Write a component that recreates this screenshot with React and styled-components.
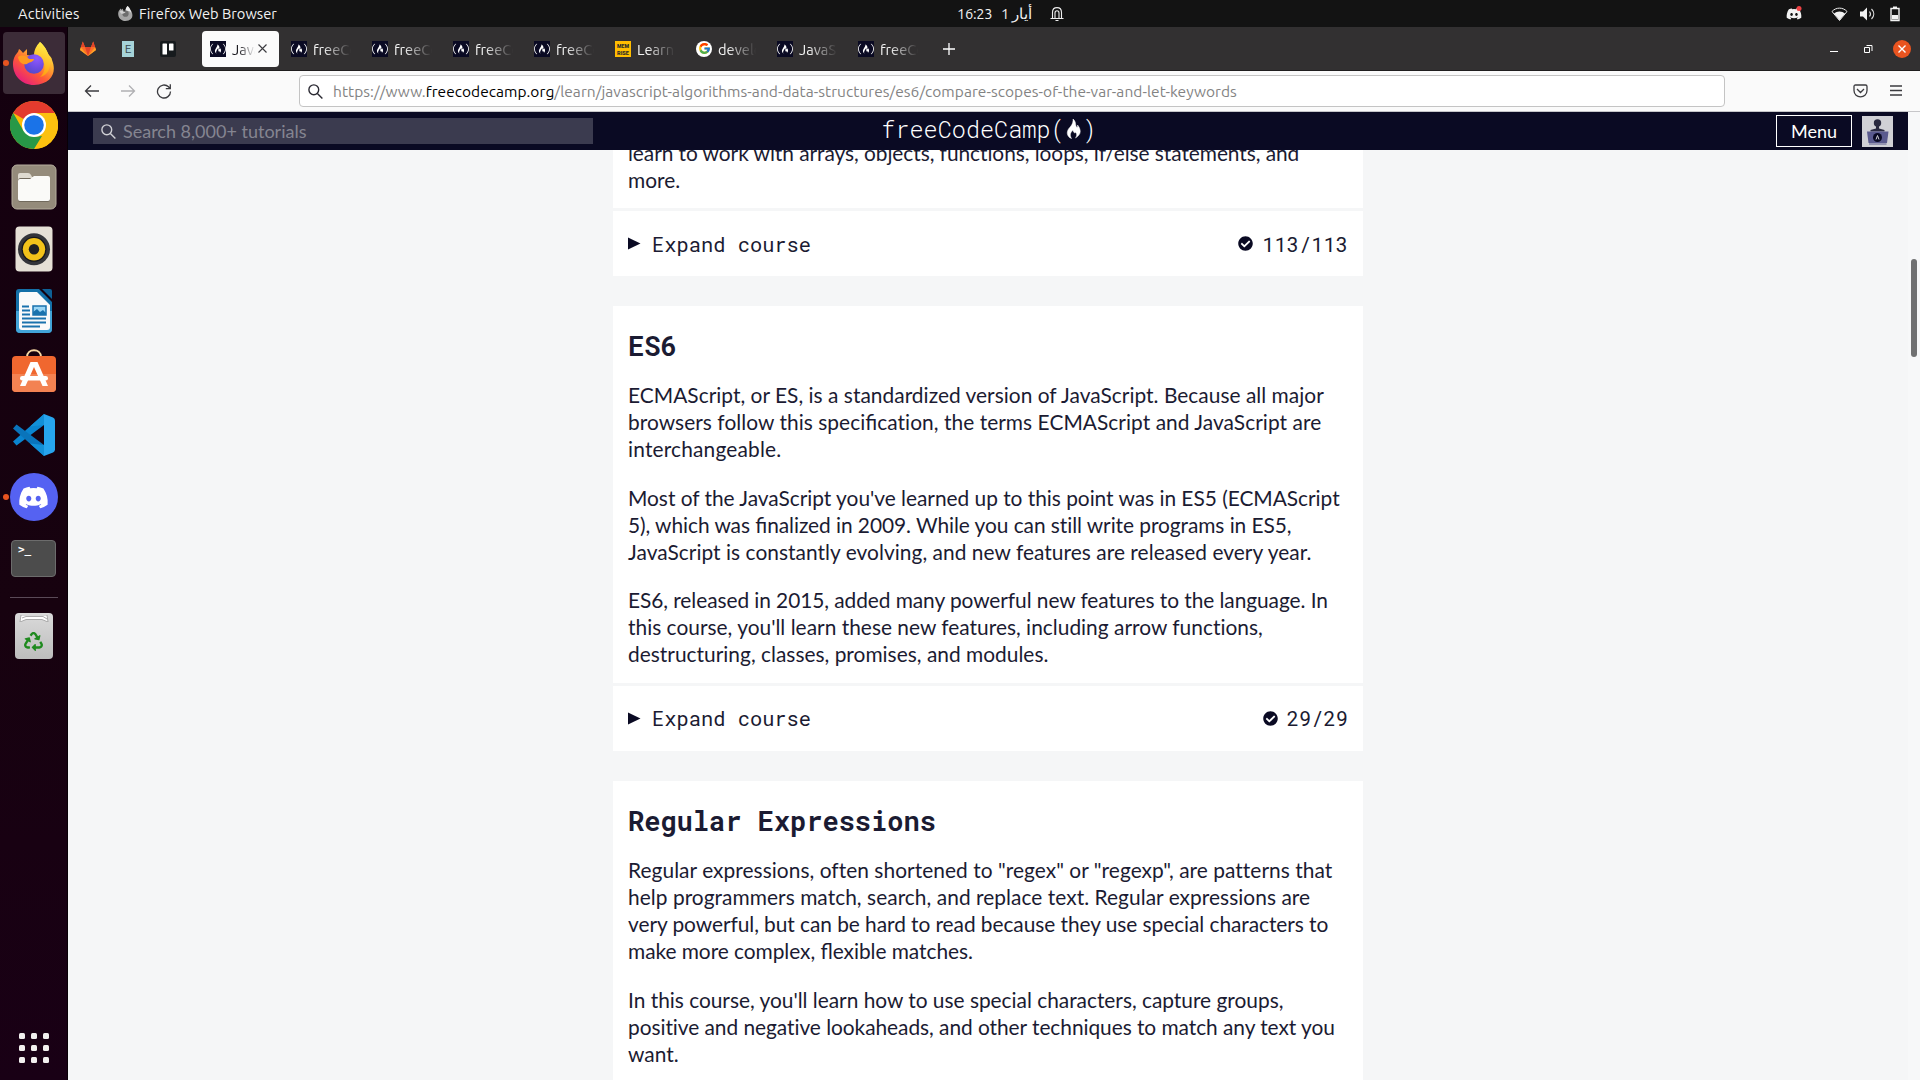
import React from 'react';
import styled, { createGlobalStyle, css } from 'styled-components';
import { FaFreeCodeCamp, FaDiscord, FaRecycle, FaCheckCircle } from 'react-icons/fa';
import { FcGoogle } from 'react-icons/fc';

const ui = '"Ubuntu", "Noto Sans", "Open Sans", sans-serif';
const body = '"Lato", sans-serif';
const mono = '"Roboto Mono", "DejaVu Sans Mono", monospace';

const GlobalStyle = createGlobalStyle`
  * { box-sizing: border-box; }
  body { margin: 0; overflow: hidden; background: #f5f6f7; }
  svg { display: block; flex: none; }
`;

const Desktop = styled.div`
  display: flex;
  flex-direction: column;
  width: 1920px;
  height: 1080px;
  overflow: hidden;
  font-family: ${ui};
`;

/* ---------- system bar ---------- */
const SystemBar = styled.header`
  display: flex;
  align-items: center;
  height: 27px;
  flex: none;
  background: #131313;
  color: #f2f2f2;
  font-size: 14.67px;
  line-height: 27px;
  padding: 0 20px 0 18px;
`;
const BarStart = styled.div`
  display: flex;
  align-items: center;
  width: 939px;
`;
const BarEnd = styled.div`
  display: flex;
  align-items: center;
  margin-left: auto;
`;
const BarText = styled.span`
  letter-spacing: ${(p) => p.$spacing || 0}px;
  width: ${(p) => (p.$width ? p.$width + 'px' : 'auto')};
  white-space: nowrap;
`;
const Clock = styled.div`
  display: flex;
  align-items: center;
  height: 27px;
`;
const Spacer = styled.span`
  flex: none;
  width: ${(p) => p.$w}px;
`;

/* ---------- dock ---------- */
const Workspace = styled.div`
  display: flex;
  flex: 1;
  min-height: 0;
`;
const Dock = styled.nav`
  display: flex;
  flex-direction: column;
  align-items: center;
  width: 68px;
  flex: none;
  padding: 5px 0 10px;
  background: linear-gradient(#14000f, #17020f 55%, #190015);
  border-right: 1px solid #080006;
`;
const DockSlot = styled.div`
  position: relative;
  display: flex;
  align-items: center;
  justify-content: center;
  width: 62px;
  height: 62px;
  padding-bottom: ${(p) => p.$lift || 0}px;
  flex: none;
  border-radius: 4px;
  background: ${(p) => (p.$active ? '#3c2c38' : 'transparent')};
  ${(p) =>
    p.$running &&
    css`
      &::before {
        content: '';
        position: absolute;
        left: 0;
        top: 28px;
        width: 6px;
        height: 6px;
        border-radius: 50%;
        background: #e95420;
      }
    `}
`;
const DockRule = styled.div`
  width: 48px;
  height: 1px;
  margin: 7px 0;
  background: #5a4a57;
`;
const AppGrid = styled.div`
  display: grid;
  grid-template-columns: repeat(3, 6px);
  gap: 6px;
  margin-top: auto;
  margin-bottom: 7px;
`;
const Dot = styled.i`
  width: 6px;
  height: 6px;
  border-radius: 1.5px;
  background: #f2f0ef;
`;

/* ---------- browser chrome ---------- */
const Browser = styled.main`
  display: flex;
  flex-direction: column;
  flex: 1;
  min-width: 0;
`;
const TabStrip = styled.div`
  display: flex;
  align-items: center;
  height: 44px;
  flex: none;
  padding-right: 9px;
  background: #323031;
  border-bottom: 1px solid #1f1d1e;
`;
const Pinned = styled.div`
  display: flex;
  align-items: center;
  gap: 26px;
  width: 134px;
  padding-left: 12px;
`;
const Tab = styled.div`
  display: flex;
  align-items: center;
  gap: 6px;
  width: ${(p) => (p.$active ? 77 : 81)}px;
  margin-right: ${(p) => (p.$active ? 4 : 0)}px;
  height: 36px;
  padding-left: 8px;
  border-radius: 4px;
  background: ${(p) => (p.$active ? '#fbfbfb' : 'transparent')};
  color: ${(p) => (p.$active ? '#15141a' : '#f4f4f4')};
`;
const TabTitle = styled.span`
  width: ${(p) => (p.$active ? 24 : 39)}px;
  margin-right: ${(p) => (p.$active ? -4 : 0)}px;
  overflow: hidden;
  white-space: nowrap;
  font-size: 14.67px;
  line-height: 20px;
  padding-top: 2px;
  mask-image: linear-gradient(to right, #000 25%, transparent 98%);
`;
const FavBox = styled.span`
  display: flex;
  align-items: center;
  justify-content: center;
  width: ${(p) => p.$w || 16}px;
  height: 16px;
  flex: none;
  background: ${(p) => p.$bg || 'transparent'};
  color: ${(p) => p.$fg || '#fff'};
  font: ${(p) => p.$font || `700 12px ${ui}`};
  text-align: center;
  border-radius: ${(p) => p.$r || 0}px;
`;
const WindowButtons = styled.div`
  display: flex;
  align-items: center;
  margin-left: auto;
`;
const NavBar = styled.div`
  display: flex;
  align-items: center;
  height: 41px;
  flex: none;
  padding: 0 18px 1px 16px;
  background: #fafafa;
  border-bottom: 1px solid #c6c6c9;
`;
const NavButtons = styled.div`
  display: flex;
  gap: 20px;
  width: 215px;
`;
const UrlBox = styled.div`
  display: flex;
  align-items: center;
  width: 1426px;
  height: 32px;
  margin-top: 1px;
  padding-left: 8px;
  gap: 10px;
  border: 1px solid #c4c4c4;
  border-radius: 4px;
  background: #fff;
  color: #838383;
  font-size: 15.5px;
  letter-spacing: 0.05px;
  white-space: nowrap;
  b { font-weight: 400; color: #000; }
`;
const NavEnd = styled.div`
  display: flex;
  align-items: center;
  gap: 22px;
  margin-left: auto;
`;

/* ---------- page ---------- */
const Viewport = styled.div`
  display: flex;
  flex: 1;
  min-height: 0;
`;
const Page = styled.div`
  display: flex;
  flex-direction: column;
  width: 1840px;
  background: #f5f6f7;
`;
const ScrollTrack = styled.div`
  width: 12px;
  padding: 147px 3px 0;
  background: #f7f8f9;
`;
const ScrollThumb = styled.div`
  height: 98px;
  border-radius: 3px;
  background: #707172;
`;
const SiteHeader = styled.div`
  display: grid;
  grid-template-columns: 1fr auto 1fr;
  align-items: center;
  height: 38px;
  flex: none;
  padding: 0 25px;
  background: #0a0a23;
`;
const SearchBox = styled.div`
  display: flex;
  align-items: center;
  gap: 7px;
  width: 500px;
  height: 26px;
  padding-left: 8px;
  background: #3b3b4f;
  color: #858591;
  font: 18px/26px ${body};
`;
const Logo = styled.div`
  display: flex;
  align-items: center;
  gap: 1.5px;
  padding: 0 0 4px 2px;
  color: #fff;
  font: 350 23.5px/32px ${mono};
`;
const HeaderEnd = styled.div`
  display: flex;
  justify-content: flex-end;
  align-items: center;
  gap: 10px;
  margin-right: -10px;
`;
const MenuButton = styled.button`
  width: 76px;
  height: 32px;
  padding: 0;
  border: 1px solid #fff;
  background: #0a0a23;
  color: #fff;
  font: 18px/28px ${body};
`;
const Avatar = styled.div`
  width: 31px;
  height: 31px;
  margin-top: 1px;
  background: #d0d0d5;
`;
const Courses = styled.div`
  display: flex;
  flex-direction: column;
  gap: 30px;
  width: 750px;
  flex: 1;
  min-height: 0;
  margin-left: 545px;
  overflow: hidden;
`;
const Course = styled.section`
  display: flex;
  flex-direction: column;
  gap: 3px;
  flex: none;
  margin-top: ${(p) => p.$shift || 0}px;
`;
const Intro = styled.div`
  padding: 0 15px ${(p) => (p.$titled ? 15.6 : 15)}px;
  background: #fff;
  color: #1b1b32;
`;
const Heading = styled.h3`
  margin: 0;
  padding: 24px 0 19.2px;
  font: 700 27px/32px ${mono};
`;
const Text = styled.p`
  margin: 0 0 21.6px;
  font: 20.9px/27px ${body};
  font-variant-ligatures: none;
  white-space: nowrap;
  &:last-child { margin-bottom: 0; }
`;
const TextLine = styled.span`
  display: block;
  letter-spacing: ${(p) => p.$tracking}px;
`;
const Ligature = styled.span`
  font-variant-ligatures: common-ligatures;
  letter-spacing: 0;
`;
const Toggle = styled.div`
  display: flex;
  align-items: center;
  height: 65px;
  padding: 0 15px;
  background: #fff;
  color: #1b1b32;
  font: 20.4px/30px ${mono};
`;
const Label = styled.span`
  margin-left: 11px;
  padding-top: 2px;
`;
const Count = styled.span`
  display: flex;
  align-items: center;
  gap: 9px;
  margin-left: auto;
`;
const CountText = styled.span`
  padding-top: 2px;
`;

/* ---------- icons ---------- */
const FirefoxIcon = () => (
  <svg width="42" height="43" viewBox="0 0 42 43">
    <defs>
      <linearGradient id="ffBody" x1="0.85" y1="0.1" x2="0.2" y2="1">
        <stop offset="0" stopColor="#fff44f" />
        <stop offset="0.3" stopColor="#ffb02e" />
        <stop offset="0.6" stopColor="#ff5a36" />
        <stop offset="1" stopColor="#e31587" />
      </linearGradient>
      <linearGradient id="ffTail" x1="0.6" y1="0" x2="0.4" y2="1">
        <stop offset="0" stopColor="#fff14a" />
        <stop offset="1" stopColor="#ff980e" />
      </linearGradient>
      <radialGradient id="ffGlobe" cx="0.65" cy="0.2" r="0.9">
        <stop offset="0" stopColor="#9059ff" />
        <stop offset="0.6" stopColor="#6a4be0" />
        <stop offset="1" stopColor="#4f4ac4" />
      </radialGradient>
    </defs>
    <path d="M27 0C33 5 34 10 36 13c1 1 3 3 3 5 5 12 0 24-18 25C9 43 0 34 0 22 0 16 3 12 5 10l1-3c2 1 3 3 4 4l4-4v6c2 0 5 1 7 3 0-5 2-11 6-16z" fill="url(#ffBody)" />
    <path d="M27 0c6 6 8 10 9 15 3 8 0 18-9 20 6-5 6-14 1-19-2-2-5-3-7-3 0-5 2-9 6-13z" fill="url(#ffTail)" />
    <circle cx="21" cy="22" r="9.8" fill="url(#ffGlobe)" />
    <path d="M5 15c4-3 9-1 11 2h5c0 3-5 3-7 5-4 1-8-1-9-7z" fill="#ff9a1f" />
  </svg>
);
const MiniFirefox = () => (
  <svg width="15" height="15" viewBox="0 0 42 43">
    <path d="M27 0C33 5 34 10 36 13c1 1 3 3 3 5 5 12 0 24-18 25C9 43 0 34 0 22 0 16 3 12 5 10l1-3c2 1 3 3 4 4l4-4v6c2 0 5 1 7 3 0-5 2-11 6-16z" fill="#a5a5a5" />
    <path d="M27 0c6 6 10 12 10 20-2-5-9-7-16-7 0-5 2-9 6-13z" fill="#eee" />
    <circle cx="21" cy="22" r="9" fill="#6e6e6e" />
    <path d="M5 15c4-3 9-1 11 2h5c0 3-5 3-7 5-4 1-8-1-9-7z" fill="#d0d0d0" />
  </svg>
);
const ChromeIcon = () => (
  <svg width="48" height="48" viewBox="0 0 48 48">
    <circle cx="24" cy="24" r="24" fill="#fbbc05" />
    <path d="M24 24 3.2 12A24 24 0 0 1 44.8 12z" fill="#e33b2e" />
    <path d="M44.8 12H24v12l10.4 6L24 48A24 24 0 0 0 44.8 12z" fill="#fcc10f" />
    <path d="M3.2 12 13.6 30 24 36l8-1L24 48A24 24 0 0 1 3.2 12z" fill="#279847" />
    <circle cx="24" cy="24" r="12" fill="#fff" />
    <circle cx="24" cy="24" r="9.8" fill="#1a73e8" />
  </svg>
);
const FilesIcon = () => (
  <svg width="46" height="46" viewBox="0 0 46 46">
    <rect x="1" y="1" width="44" height="44" rx="5" fill="#948b7b" stroke="#b5ad9e" />
    <path d="M7 14V11q0-2 2-2h8q2 0 3 2l1 2h16v6H7z" fill="#dedad0" />
    <rect x="7" y="14" width="32" height="24" rx="2.5" fill="#716a5d" />
    <path d="M7 17q0-2 2-2h10l4-3h14q2 0 2 2v21q0 2-2 2H9q-2 0-2-2z" fill="#fafaf8" />
  </svg>
);
const MusicIcon = () => (
  <svg width="38" height="46" viewBox="0 0 38 46">
    <rect x="0.5" y="0.5" width="37" height="45" rx="4" fill="#e5e0d6" />
    <circle cx="19" cy="23.300" r="16" fill="#34353a" />
    <circle cx="19" cy="23.300" r="12.500" fill="#17181c" />
    <circle cx="19" cy="23.300" r="11.200" fill="#f2c21a" />
    <circle cx="19" cy="23.300" r="5.200" fill="#202123" />
  </svg>
);
const WriterIcon = () => (
  <svg width="38" height="46" viewBox="0 0 38 46">
    <path d="M4 1h20l13 13v27q0 4-4 4H5q-4 0-4-4V4q0-3 3-3z" fill="#1470a8" />
    <path d="M1 23h36v18q0 4-4 4H5q-4 0-4-4z" fill="#42a4d8" />
    <path d="M6 4h16l13 13v22q0 3-3 3H7q-3 0-3-3V6q0-2 2-2z" fill="#fafafa" />
    <path d="M27 1h8q2 0 2 2v8z" fill="#0e6096" />
    <path d="M7 18.500h7M7 22.500h8M7 26.500h8M7 30.500h24M7 34.500h24M7 38.500h18" stroke="#1a72ad" strokeWidth="1.800" />
    <rect x="18" y="18" width="13" height="9" fill="#9bd6f5" stroke="#1a72ad" strokeWidth="1.500" />
    <path d="M18 27v-3l4-3 3 3 3-2 3 3v2z" fill="#1a72ad" />
  </svg>
);
const SoftwareIcon = () => (
  <svg width="46" height="44" viewBox="0 0 46 44">
    <path d="M16 8c0-9 14-9 14 0" fill="none" stroke="#f7d9a4" strokeWidth="2" />
    <rect x="1" y="7" width="44" height="36" rx="4" fill="#f0672f" />
    <path d="M1 25h44v14q0 4-4 4H5q-4 0-4-4z" fill="#f38252" />
    <path d="M19.500 13h7l10.500 24h-5.500L23 18l-8.500 19H9z" fill="#fff" />
    <rect x="9" y="27" width="28" height="4.600" rx="2.300" fill="#fff" />
  </svg>
);
const CodeIcon = () => (
  <svg width="42" height="42" viewBox="0 0 42 42">
    <path d="M31 0 0 27.500l3.500 4L31 11z" fill="#0a84cf" />
    <path d="M31 42 0 14.500l3.500-4L31 31z" fill="#0a74bb" />
    <path d="M31 0 17 12.500l14-1.500zM31 42 17 29.500 31 31z" fill="#1290d8" />
    <path d="m31 0 9 3.500q2 1 2 3v29q0 2-2 3L31 42z" fill="#27a5ee" />
  </svg>
);
const DiscordCircle = styled.div`
  display: flex;
  align-items: center;
  justify-content: center;
  width: 48px;
  height: 48px;
  border-radius: 50%;
  background: #5562f2;
  color: #fff;
  font-size: 31px;
`;
const TerminalIcon = styled.div`
  width: 45px;
  height: 37px;
  padding: 2px 0 0 6px;
  border: 1px solid #6c6c6c;
  border-radius: 4px;
  background: #4c4c4c;
  color: #fff;
  font: 700 11px/13px "DejaVu Sans Mono", monospace;
`;
const TrashIcon = styled.div`
  display: flex;
  flex-direction: column;
  align-items: center;
  gap: 10px;
  width: 38px;
  height: 46px;
  padding-top: 2px;
  border-radius: 4px;
  background: linear-gradient(#dadada, #bdbdbd);
  color: #1f8a1f;
  font-size: 19px;
`;
const GitlabIcon = () => (
  <svg width="16" height="16" viewBox="0 0 16 16">
    <path d="M8 15 0 9l2.800-8.500L5 6h6l2.200-5.500L16 9z" fill="#fc6d26" />
    <path d="M8 15 5 6h6z" fill="#e24329" />
    <path d="M8 15 0 9l.8-2.700zM8 15l8-6-.8-2.700z" fill="#fca326" />
    <path d="M2.800.5 5 6H1zM13.200.5 15 6h-4z" fill="#e24329" />
  </svg>
);
const TrelloIcon = () => (
  <svg width="16" height="16" viewBox="0 0 16 16">
    <rect width="16" height="16" rx="2" fill="#161a1d" />
    <rect x="2.500" y="2.500" width="4.500" height="11" rx=".6" fill="#fff" />
    <rect x="9" y="2.500" width="4.500" height="7" rx=".6" fill="#fff" />
  </svg>
);
const SearchIcon = ({ color }) => (
  <svg width="15" height="15" viewBox="0 0 15 15" fill="none" stroke={color} strokeWidth="1.400">
    <circle cx="5.800" cy="5.800" r="4.900" />
    <path d="m9.400 9.400 5 5" />
  </svg>
);
const Stroke = ({ w = 16, h = 16, d, color = '#3b3b3f', sw = 1.3 }) => (
  <svg width={w} height={h} viewBox={`0 0 ${w} ${h}`} fill="none" stroke={color} strokeWidth={sw}>
    <path d={d} />
  </svg>
);
const Flame = () => (
  <svg width="15" height="20" viewBox="0 0 15 20">
    <path d="M7 0c3.500 3 2 6 3.500 8 1 1 1.200-.5 1-2 3 3.500 4 8 .5 11l-2.500 2c2-3 1-4.500 0-6-.2 1-.7 1-1.500.5C7 12.500 7.200 11.500 7 11c-2 2-4 4.500-1.500 8.500C1.500 18 0 14 2.500 10 5 7 7.500 4.500 7 0z" fill="#fff" stroke="#fff" strokeWidth=".5" />
  </svg>
);
const AvatarArt = () => (
  <svg width="31" height="31" viewBox="0 0 31 31">
    <circle cx="15.500" cy="7" r="3.700" fill="#2a2a40" />
    <path d="M14 10h3v2.500l5.500 1.500v1.500h-14V14l5.500-1.500z" fill="#2a2a40" />
    <path d="M5 15.500h21.500L25 27H6.500z" fill="#5a5a8e" />
    <path d="M7 28h17.500" stroke="#5a5a8e" />
    <circle cx="15.500" cy="21.500" r="4.500" fill="#0a0a23" />
    <path d="m14 23.500 1.500-4 1.500 4" fill="none" stroke="#d0d0d5" />
  </svg>
);
const Triangle = () => (
  <svg width="13" height="13" viewBox="0 0 13 13">
    <path d="M0 .5 12.500 6.500 0 12.500z" fill="#0a0a23" />
  </svg>
);

const FccFav = () => (
  <FavBox $bg="#0a0a23">
    <FaFreeCodeCamp size={16} />
  </FavBox>
);

const TABS = [
  ['fcc', 'freeCodeCamp'],
  ['fcc', 'freeCodeCamp'],
  ['fcc', 'freeCodeCamp'],
  ['fcc', 'freeCodeCamp'],
  ['mem', 'Learn a'],
  ['google', 'develop'],
  ['fcc', 'JavaScript'],
  ['fcc', 'freeCodeCamp'],
];

const MemFav = () => (
  <svg width="16" height="16" viewBox="0 0 16 16">
    <rect width="16" height="16" fill="#ffbd00" />
    <text x="8" y="7.300" textAnchor="middle" textLength="12" lengthAdjust="spacingAndGlyphs" fontSize="6" fontWeight="900" fontFamily="Roboto, sans-serif" fill="#2b2b2b">MEM</text>
    <text x="8" y="13.700" textAnchor="middle" textLength="12" lengthAdjust="spacingAndGlyphs" fontSize="6" fontWeight="900" fontFamily="Roboto, sans-serif" fill="#2b2b2b">RISE</text>
  </svg>
);
const Favicon = ({ kind }) => {
  if (kind === 'mem') return <MemFav />;
  if (kind === 'google')
    return (
      <FavBox $bg="#fff" $r={8}>
        <FcGoogle size={13} />
      </FavBox>
    );
  return <FccFav />;
};

/* each line is its text and its tracking in pixels */
const COURSES = [
  {
    shift: -11,
    paragraphs: [
      [
        ['learn to work with arrays, objects, functions, loops, if/else statements, and', -0.06],
        ['more.', 0],
      ],
    ],
    count: '113/113',
  },
  {
    title: 'ES6',
    paragraphs: [
      [
        ['ECMAScript, or ES, is a standardized version of JavaScript. Because all major', 0.025],
        ['browsers follow this specification, the terms ECMAScript and JavaScript are', 0.05],
        ['interchangeable.', 0.18],
      ],
      [
        ["Most of the JavaScript you've learned up to this point was in ES5 (ECMAScript", -0.025],
        ['5), which was finalized in 2009. While you can still write programs in ES5,', -0.06],
        ['JavaScript is constantly evolving, and new features are released every year.', 0.04],
      ],
      [
        ['ES6, released in 2015, added many powerful new features to the language. In', -0.07],
        ["this course, you'll learn these new features, including arrow functions,", 0.01],
        ['destructuring, classes, promises, and modules.', 0.01],
      ],
    ],
    count: '29/29',
  },
  {
    title: 'Regular Expressions',
    paragraphs: [
      [
        ['Regular expressions, often shortened to "regex" or "regexp", are patterns that', 0.045],
        ['help programmers match, search, and replace text. Regular expressions are', 0.045],
        ['very powerful, but can be hard to read because they use special characters to', -0.06],
        ['make more complex, flexible matches.', -0.05],
      ],
      [
        ["In this course, you'll learn how to use special characters, capture groups,", -0.015],
        ['positive and negative lookaheads, and other techniques to match any text you', -0.05],
        ['want.', 0],
      ],
    ],
  },
];

/* only the fi and fl pairs are joined in body copy */
const Line = ({ text, tracking }) => (
  <TextLine $tracking={tracking}>
    {text.split(/(fi|fl)/).map((part, i) => (i % 2 ? <Ligature key={i}>{part}</Ligature> : part))}
  </TextLine>
);

const CourseCard = ({ title, paragraphs, count, shift }) => (
  <Course $shift={shift}>
    <Intro $titled={Boolean(title)}>
      {title && <Heading>{title}</Heading>}
      {paragraphs.map((lines, i) => (
        <Text key={i}>
          {lines.map(([text, tracking]) => (
            <Line key={text} text={text} tracking={tracking} />
          ))}
        </Text>
      ))}
    </Intro>
    {count && (
      <Toggle>
        <Triangle />
        <Label>Expand course</Label>
        <Count>
          <FaCheckCircle size={15} color="#0a0a23" />
          <CountText>{count}</CountText>
        </Count>
      </Toggle>
    )}
  </Course>
);

export default function App() {
  return (
    <Desktop>
      <GlobalStyle />
      <SystemBar>
        <BarStart>
          <BarText $width={100} $spacing={0.15}>Activities</BarText>
          <MiniFirefox />
          <Spacer $w={6} />
          <BarText>Firefox Web Browser</BarText>
        </BarStart>
        <Clock>
          <BarText $width={44} $spacing={-0.3}>16:23</BarText>
          <BarText $width={11}>1</BarText>
          <BarText>أيار</BarText>
          <Spacer $w={18} />
          <Stroke w={14} h={16} color="#eee" sw={1.1} d="M.5 12.500h13M2.500 12.500V6.500c0-6.500 9-6.500 9 0v6M5 12V7c0-3 4-3 4 0V12M5.500 14.500h3" />
        </Clock>
        <BarEnd>
          <svg width="17" height="15" viewBox="0 0 17 15">
            <FaDiscord size={16} y={0} color="#f2f2f2" />
            <circle cx="13" cy="2.500" r="2.500" fill="#ed4245" />
          </svg>
          <Spacer $w={28} />
          <svg width="17" height="14" viewBox="0 0 17 14">
            <path d="M1 4.500C5 0 12 0 16 4.500L8.500 13.500z" fill="none" stroke="#eee" />
            <path d="M3 6.500c3-2.800 8-2.800 11 0l-5.500 6.800z" fill="#f2f2f2" />
          </svg>
          <Spacer $w={12} />
          <svg width="16" height="14" viewBox="0 0 16 14">
            <path d="M0 4.500h3L7 .5v13l-4-4H0z" fill="#f2f2f2" />
            <path d="M9.500 4.500c1.200 1.500 1.200 3.500 0 5M11.500 2c3 3 3 7 0 10" fill="none" stroke="#ddd" strokeWidth="1.200" />
          </svg>
          <Spacer $w={14} />
          <svg width="10" height="16" viewBox="0 0 10 16">
            <path d="M1 2.500h8v12H1zM3 1.200h4" fill="none" stroke="#f2f2f2" strokeWidth="1.400" />
            <path d="M2 9h6v4.500H2z" fill="#f2f2f2" />
          </svg>
        </BarEnd>
      </SystemBar>

      <Workspace>
        <Dock>
          <DockSlot $active $running><FirefoxIcon /></DockSlot>
          <DockSlot><ChromeIcon /></DockSlot>
          <DockSlot><FilesIcon /></DockSlot>
          <DockSlot><MusicIcon /></DockSlot>
          <DockSlot><WriterIcon /></DockSlot>
          <DockSlot $lift={5}><SoftwareIcon /></DockSlot>
          <DockSlot><CodeIcon /></DockSlot>
          <DockSlot $running><DiscordCircle><FaDiscord /></DiscordCircle></DockSlot>
          <DockSlot $lift={1}><TerminalIcon>&gt;_</TerminalIcon></DockSlot>
          <DockRule />
          <DockSlot>
            <TrashIcon>
              <svg width="30" height="7" viewBox="0 0 30 7">
                <path d="M2 0h26l1 7-6-2.500H7L1 7z" fill="#fff" stroke="#999" strokeWidth=".8" />
                <path d="M3 3l4-1.500h17L28 4" fill="none" stroke="#888" strokeWidth=".7" />
              </svg>
              <FaRecycle />
            </TrashIcon>
          </DockSlot>
          <AppGrid>
            {Array.from({ length: 9 }, (_, i) => <Dot key={i} />)}
          </AppGrid>
        </Dock>

        <Browser>
          <TabStrip>
            <Pinned>
              <GitlabIcon />
              <FavBox $bg="#a6d3d8" $fg="#37474f" $w={12} $font={`400 12px/16px ${ui}`}>E</FavBox>
              <TrelloIcon />
            </Pinned>
            <Tab $active>
              <FccFav />
              <TabTitle $active>JavaScript</TabTitle>
              <Stroke w={9} h={9} d="m.5.5 8 8m0-8-8 8" sw={1.1} />
            </Tab>
            {TABS.map(([kind, title], i) => (
              <Tab key={i}>
                <Favicon kind={kind} />
                <TabTitle>{title}</TabTitle>
              </Tab>
            ))}
            <Spacer $w={12} />
            <Stroke w={12} h={12} color="#fff" d="M6 0v12M0 6h12" />
            <WindowButtons>
              <Stroke w={8} h={16} color="#fff" sw={1} d="M0 10.500h8" />
              <Spacer $w={26} />
              <Stroke w={9} h={12} color="#fff" sw={1} d="M.5 4.500h5v5h-5zM2.500 2.500h5.500v5.500" />
              <Spacer $w={20} />
              <svg width="18" height="18" viewBox="0 0 18 18">
                <circle cx="9" cy="9" r="9" fill="#e95420" />
                <path d="m5.500 5.500 7 7m0-7-7 7" stroke="#fff" strokeWidth="1.400" />
              </svg>
            </WindowButtons>
          </TabStrip>
          <NavBar>
            <NavButtons>
              <Stroke d="M15 8H1.500M7 2.500 1.500 8 7 13.500" />
              <Stroke color="#b0b0b3" d="M1 8h13.500M9 2.500 14.500 8 9 13.500" />
              <Stroke d="M14.500 8.500A6.500 6.500 0 1 1 12.500 3.800L14 5.500M14.300 1.200v4.500H9.800" />
            </NavButtons>
            <UrlBox>
              <SearchIcon color="#2b2a33" />
              <span>
                https://www.<b>freecodecamp.org</b>/learn/javascript-algorithms-and-data-structures/es6/compare-scopes-of-the-var-and-let-keywords
              </span>
            </UrlBox>
            <NavEnd>
              <Stroke w={15} h={14} d="M2.500 1h10q1.500 0 1.500 1.500V6.500c0 8.500-13 8.500-13 0V2.500Q1 1 2.500 1zM4 5l3.500 3.500L11 5" />
              <Stroke w={12} h={11} d="M0 1h12M0 5.500h12M0 10h12" />
            </NavEnd>
          </NavBar>
          <Viewport>
            <Page>
              <SiteHeader>
                <SearchBox>
                  <SearchIcon color="#d0d0d5" />
                  Search 8,000+ tutorials
                </SearchBox>
                <Logo>
                  <span>freeCodeCamp(</span>
                  <Flame />
                  <span>)</span>
                </Logo>
                <HeaderEnd>
                  <MenuButton>Menu</MenuButton>
                  <Avatar><AvatarArt /></Avatar>
                </HeaderEnd>
              </SiteHeader>
              <Courses>
                {COURSES.map((c, i) => <CourseCard key={i} {...c} />)}
              </Courses>
            </Page>
            <ScrollTrack>
              <ScrollThumb />
            </ScrollTrack>
          </Viewport>
        </Browser>
      </Workspace>
    </Desktop>
  );
}
